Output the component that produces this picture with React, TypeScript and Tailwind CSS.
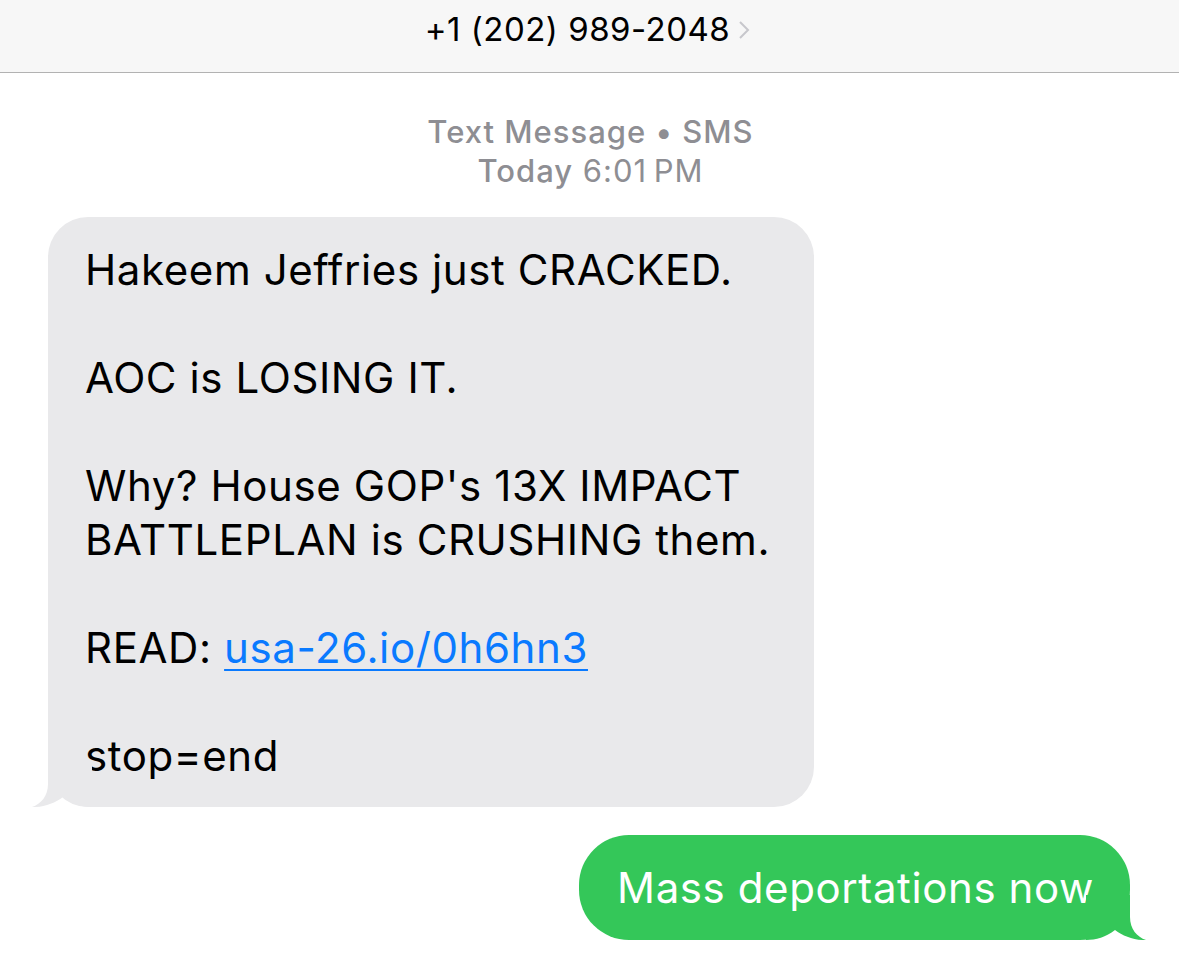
import React from 'react';

const font = { fontFamily: 'Inter, "Liberation Sans", Arial, sans-serif' };

// bubble tail, drawn for the left side; flip for the right one
const Tail: React.FC<{ color: string; flip?: boolean }> = ({ color, flip }) => (
  <svg
    width="60"
    height="45"
    viewBox="0 0 60 45"
    className={flip ? 'absolute -right-[16px] bottom-0 -scale-x-100' : 'absolute -left-[16px] bottom-0'}
  >
    <path d="M16 0 L16 22 C16 34 9 42 0 45 C12 45.5 23 41 31 35 C40 42 50 45 60 45 L60 0 Z" fill={color} />
  </svg>
);

export default function App() {
  return (
    <div className="w-[1179px] h-[965px] bg-white overflow-hidden" style={font}>
      {/* Header */}
      <div className="h-[73px] bg-[#f7f7f7] border-b border-[#b2b2b2] flex items-start justify-center pt-[10px]">
        <div className="flex items-center gap-[8px] pr-[4px]">
          <span className="text-[33px] leading-[38px] text-black tracking-[0.5px]">+1 (202) 989-2048</span>
          <svg width="12" height="20" viewBox="0 0 12 20" className="mt-[2px]">
            <polyline points="2,2 10,10 2,18" fill="none" stroke="#c7c7cc" strokeWidth="2" />
          </svg>
        </div>
      </div>

      {/* Timestamp */}
      <div className="mt-[39px] flex flex-col items-center pl-[2px] text-[#8e8e93] text-[31px] leading-[39px] tracking-[1px]">
        <div className="font-medium">Text Message • SMS</div>
        <div>
          <span className="font-medium">Today</span> 6:01{'\u2009'}PM
        </div>
      </div>

      {/* Incoming */}
      <div className="mt-[27px] pl-[48px]">
        <div className="relative w-[766px] bg-[#e9e9eb] rounded-[40px] pt-[26px] pb-[24px] pl-[37px] text-black text-[42px] leading-[54px] tracking-[0.6px]">
          <div>Hakeem Jeffries just CRACKED.</div>
          <div className="h-[54px]" />
          <div>AOC is LOSING IT.</div>
          <div className="h-[54px]" />
          <div>Why? House GOP's 13X IMPACT</div>
          <div>BATTLEPLAN is CRUSHING them.</div>
          <div className="h-[54px]" />
          <div>
            READ: <span className="text-[#0a7aff] underline decoration-2 underline-offset-[6px]">usa-26.io/0h6hn3</span>
          </div>
          <div className="h-[54px]" />
          <div>stop=end</div>
          <Tail color="#e9e9eb" />
        </div>
      </div>

      {/* Outgoing */}
      <div className="mt-[28px] flex justify-end pr-[49px]">
        <div className="relative h-[105px] bg-[#34c759] rounded-[50px] pl-[38px] pr-[36px] flex items-center text-white text-[42px] tracking-[0.6px]">
          <span className="relative">Mass deportations now</span>
          <Tail color="#34c759" flip />
        </div>
      </div>
    </div>
  );
}
